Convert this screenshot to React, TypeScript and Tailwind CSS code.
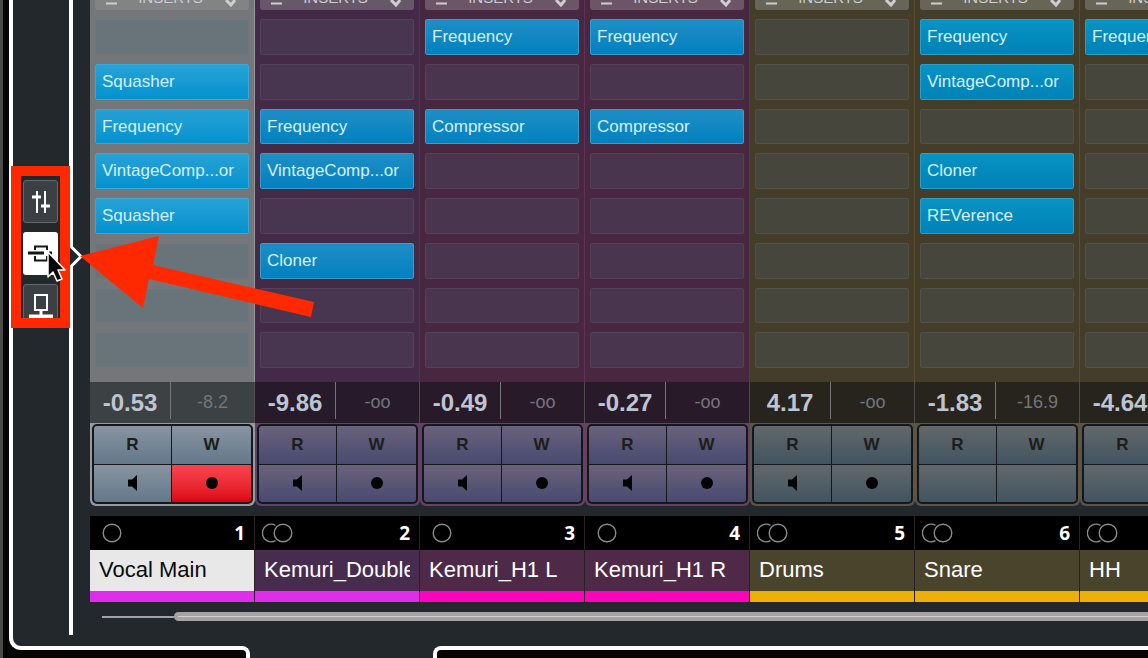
import React from "react";
import clsx from "clsx";

type Theme = {
  body: string;
  slot: string;
  plugin: string;
  header: string;
  level: string;
  frame: string;
  button: string;
  name: string;
};

type Channel = {
  id: number;
  name: string;
  theme: Theme;
  color: string;
  stereo?: boolean;
  inserts: string[];
  level: string;
  peak: string;
  armed?: boolean;
  hasMonitor?: boolean;
};

const selected: Theme = {
  body: "bg-[#747679] border-[#94979b]",
  slot: "border-[#70787e] bg-[#69737a]",
  plugin: "border-[#3aa9d8] from-[#25a2d6] to-[#0092cf] text-[#d3f0fc]",
  header: "bg-[#828385]",
  level: "bg-[#3c4143]",
  frame: "bg-[#989b9e]",
  button: "from-[#8994a0] to-[#63788a]",
  name: "bg-[#e8e8e8] text-[#0a0a0a]",
};

const purple: Theme = {
  body: "bg-[#432b47] border-[#5e2b5c]",
  slot: "border-[#56415d] bg-[#483651]",
  plugin: "border-[#3a9ccb] from-[#1d8ec5] to-[#0081bf] text-[#d3f0fc]",
  header: "bg-[#68576b]",
  level: "bg-[#271b2b]",
  frame: "bg-[#5f4268]",
  button: "from-[#6b627b] to-[#474a70]",
  name: "bg-[#482c50] text-white",
};

const pink: Theme = {
  ...purple,
  body: "bg-[#482741] border-[#633058]",
  slot: "border-[#59405a] bg-[#4a354f]",
  header: "bg-[#6b5567]",
  level: "bg-[#291a29]",
  frame: "bg-[#684160]",
  name: "bg-[#4e2948] text-white",
};

const gold: Theme = {
  body: "bg-[#433d29] border-[#5d4d31]",
  slot: "border-[#535246] bg-[#46463d]",
  plugin: "border-[#2a9fc6] from-[#0993c4] to-[#0082b7] text-[#d3f0fc]",
  header: "bg-[#666557]",
  level: "bg-[#27241e]",
  frame: "bg-[#5d5444]",
  button: "from-[#63686a] to-[#425462]",
  name: "bg-[#4b442c] text-white",
};

const channels: Channel[] = [
  {
    id: 1,
    name: "Vocal Main",
    theme: selected,
    color: "bg-[#df2ee9]",
    inserts: ["", "Squasher", "Frequency", "VintageComp...or", "Squasher", "", "", ""],
    level: "-0.53",
    peak: "-8.2",
    armed: true,
    hasMonitor: true,
  },
  {
    id: 2,
    name: "Kemuri_Double",
    theme: purple,
    color: "bg-[#df2ee9]",
    stereo: true,
    inserts: ["", "", "Frequency", "VintageComp...or", "", "Cloner", "", ""],
    level: "-9.86",
    peak: "-oo",
    hasMonitor: true,
  },
  {
    id: 3,
    name: "Kemuri_H1 L",
    theme: pink,
    color: "bg-[#fa05b9]",
    inserts: ["Frequency", "", "Compressor", "", "", "", "", ""],
    level: "-0.49",
    peak: "-oo",
    hasMonitor: true,
  },
  {
    id: 4,
    name: "Kemuri_H1 R",
    theme: pink,
    color: "bg-[#fa05b9]",
    inserts: ["Frequency", "", "Compressor", "", "", "", "", ""],
    level: "-0.27",
    peak: "-oo",
    hasMonitor: true,
  },
  {
    id: 5,
    name: "Drums",
    theme: gold,
    color: "bg-[#edb008]",
    stereo: true,
    inserts: ["", "", "", "", "", "", "", ""],
    level: "4.17",
    peak: "-oo",
    hasMonitor: true,
  },
  {
    id: 6,
    name: "Snare",
    theme: gold,
    color: "bg-[#edb008]",
    stereo: true,
    inserts: ["Frequency", "VintageComp...or", "", "Cloner", "REVerence", "", "", ""],
    level: "-1.83",
    peak: "-16.9",
  },
  {
    id: 7,
    name: "HH",
    theme: gold,
    color: "bg-[#edb008]",
    stereo: true,
    inserts: ["Frequency", "", "", "", "", "", "", ""],
    level: "-4.64",
    peak: "-oo",
  },
];

const SpeakerIcon = () => (
  <svg width="10" height="16" viewBox="0 0 10 16" fill="#050505">
    <path d="M0 4.5h4L9 0v16L4 11.5H0z" />
  </svg>
);

const RecordIcon = () => (
  <svg width="12" height="12" viewBox="0 0 12 12" fill="#050505">
    <circle cx="6" cy="6" r="6" />
  </svg>
);

const ChannelFormat: React.FC<{ stereo?: boolean }> = ({ stereo }) => (
  <svg width="31" height="20" viewBox="0 0 31 20" fill="none" stroke="#8c8c8c" strokeWidth="1.4">
    {stereo ? (
      <>
        <path d="M13.500 2.300A8.800 8.800 0 1 0 13.500 17.700" />
        <circle cx="21" cy="10" r="8.800" />
      </>
    ) : (
      <circle cx="15" cy="10" r="8.8" />
    )}
  </svg>
);

const InsertsHeader: React.FC<{ className: string }> = ({ className }) => (
  <button
    className={clsx(
      "flex h-6 w-full items-center justify-between rounded-[3px] px-2.5 text-[15px] leading-6 text-[#cfcdd0]",
      className
    )}
  >
    <svg width="13" height="14" viewBox="0 0 13 14" fill="none" stroke="currentColor" strokeWidth="2">
      <path d="M3 2h7v6H3zM1 12.500h11" />
    </svg>
    INSERTS
    <svg width="16" height="18" viewBox="0 0 16 18" fill="none" stroke="currentColor" strokeWidth="3">
      <path d="M3 5l5-4 5 4M3 11l5 5 4-5" />
    </svg>
  </button>
);

const ChannelStrip: React.FC<{ channel: Channel }> = ({ channel }) => {
  const { theme } = channel;
  const button = clsx(
    "flex items-center justify-center bg-linear-to-b text-[17px] font-bold text-[#1d1d1b]",
    theme.button
  );

  return (
    <section className="w-[165px] shrink-0">
      <div className={clsx("h-[396px] border-r pr-[5px] pl-[5px]", theme.body)}>
        <InsertsHeader className={theme.header} />
        <div className="mt-[9px] grid h-[349px] grid-rows-8 gap-[9px]">
          {channel.inserts.map((insert, i) => (
            <button
              key={i}
              aria-label={insert || `Insert ${i + 1}`}
              className={clsx(
                "rounded-[2px] border px-1.5 text-left text-[17px]",
                insert ? ["bg-linear-to-b", theme.plugin] : theme.slot
              )}
            >
              {insert}
            </button>
          ))}
        </div>
      </div>

      <div className={clsx("grid h-[41px] grid-cols-[80px_1fr] border-r border-[#514a50] text-center", theme.level)}>
        <span className="self-center text-[24px] leading-6 font-bold text-[#bec5d0]">{channel.level}</span>
        <span className="mb-1 flex items-center justify-center border-l border-[#77767a] pt-1 text-[18px] text-[#74757a]">
          {channel.peak}
        </span>
      </div>

      <div className={clsx("rounded-b-[6px] p-[2px] pt-px", theme.frame)}>
        <div className="grid h-20 grid-cols-[77px_1fr] grid-rows-2 gap-px overflow-hidden rounded-[5px] border-2 border-[#14171c] bg-[#14171c]">
          <button className={button}>R</button>
          <button className={button}>W</button>
          <button className={button} aria-label="Monitor">
            {channel.hasMonitor && <SpeakerIcon />}
          </button>
          <button
            aria-label="Record enable"
            className={
              channel.armed
                ? "flex items-center justify-center bg-linear-to-b from-[#fb4350] to-[#dc0010]"
                : button
            }
          >
            {channel.hasMonitor && <RecordIcon />}
          </button>
        </div>
      </div>

      <div className="mt-2.5 border-r border-[#2b2027]">
        <div className="flex h-[34px] items-center justify-between bg-black pr-[9px] pl-[7px] font-['Open_Sans'] text-[19px] font-bold text-white">
          <ChannelFormat stereo={channel.stereo} />
          {channel.id}
        </div>
        <div className={clsx("h-[41px] pr-[9px] pl-[9px] text-[22px] leading-10", theme.name)}>
          <div className="overflow-hidden whitespace-nowrap">{channel.name}</div>
        </div>
        <div className={clsx("h-[11px]", channel.color)} />
      </div>
    </section>
  );
};

const railButton =
  "flex h-[43px] w-[35px] shrink-0 items-center justify-center rounded-[3px] border border-[#62686b] bg-[#3a4043] text-white";

// section buttons with the highlight frame around them
const SectionPicker = () => (
  <nav className="absolute top-[166px] left-2 h-[162px] w-[59px] overflow-hidden border-[10px] border-[#ff2900] bg-[#23282b]">
    <div className="flex flex-col items-center gap-[9px] pt-1">
      <button className={railButton} aria-label="Faders">
        <svg width="20" height="24" viewBox="0 0 20 24" fill="none" stroke="currentColor">
          <path d="M6 1v22M14 1v22" strokeWidth="2" />
          <path d="M1 7h9M10 16h9" strokeWidth="3" />
        </svg>
      </button>
      <button
        className="flex h-[43px] w-[35px] shrink-0 items-center justify-center rounded-[3px] bg-white text-[#161616]"
        aria-label="Inserts"
      >
        <svg width="25" height="20" viewBox="0 0 25 20" fill="none" stroke="currentColor">
          <path d="M7 6V2.500h12V6M7 12v4.500h12V12" strokeWidth="2" />
          <path d="M0 9h16M21 9h3" strokeWidth="3" />
        </svg>
      </button>
      <button className={railButton} aria-label="Sends">
        <svg width="26" height="26" viewBox="0 0 26 26" fill="none" stroke="currentColor">
          <path d="M7 2h12v15H7z" strokeWidth="2" />
          <path d="M13 17v5" strokeWidth="3" />
          <path d="M1 23.5h24" strokeWidth="4" />
        </svg>
      </button>
    </div>
  </nav>
);

const App: React.FC = () => {
  return (
    <div className="relative flex h-screen flex-col overflow-hidden border-l-[3px] border-[#4c4c4a] bg-[#050505] font-['Liberation_Sans',Arial,sans-serif]">
      <main className="ml-1.5 flex min-h-0 flex-1 overflow-hidden rounded-bl-[12px] border-b-4 border-l-4 border-white bg-[#23282c]">
        <div className="relative h-[635px] w-[60px] shrink-0 border-r-4 border-white">
          <svg className="absolute top-[244px] left-14" width="16" height="25" viewBox="0 0 16 25">
            <path d="M0 2h2l10 10.500L2 23H0z" fill="#23282b" />
            <path d="M1 1.500l11 11-11 11" fill="none" stroke="white" strokeWidth="3" />
          </svg>
        </div>
        <div className="ml-[17px] min-w-0 flex-1 overflow-hidden">
          <div className="-mt-3.5 flex">
            {channels.map((channel) => (
              <ChannelStrip key={channel.id} channel={channel} />
            ))}
          </div>
          <div className="mt-2.5 ml-3 flex items-center">
            <div className="h-0.5 w-[72px] bg-[#a5a3a5]" />
            <div className="flex h-[9px] flex-1 items-center rounded-l-full bg-[#a7a2a3]">
              <div className="ml-1 h-px flex-1 bg-[#d3cfd0]" />
            </div>
          </div>
        </div>
      </main>

      <footer className="relative -mt-1 ml-[19px] flex h-3 shrink-0 bg-[#23282c]">
        <div className="w-[228px] rounded-tr-[8px] border-t-4 border-r-4 border-white bg-[#050505]" />
        <div className="w-[183px]" />
        <div className="flex-1 rounded-tl-[8px] border-t-4 border-l-4 border-white bg-[#050505]" />
      </footer>

      <SectionPicker />

      {/* pointer */}
      <svg className="absolute top-[250px] left-[43px]" width="20" height="34" viewBox="0 0 20 34">
        <path
          d="M2 2v25l5-5 4 9 5-2-4-9h7z"
          fill="#080808"
          stroke="white"
          strokeWidth="1.5"
          strokeLinejoin="round"
        />
      </svg>
      <svg className="absolute top-[230px] left-[76px]" width="240" height="90" viewBox="0 0 240 90">
        <path d="M1 26L80 6L74 35L235 72L232 87L70 49L64 78z" fill="#ff2900" />
      </svg>
    </div>
  );
};

export default App;
